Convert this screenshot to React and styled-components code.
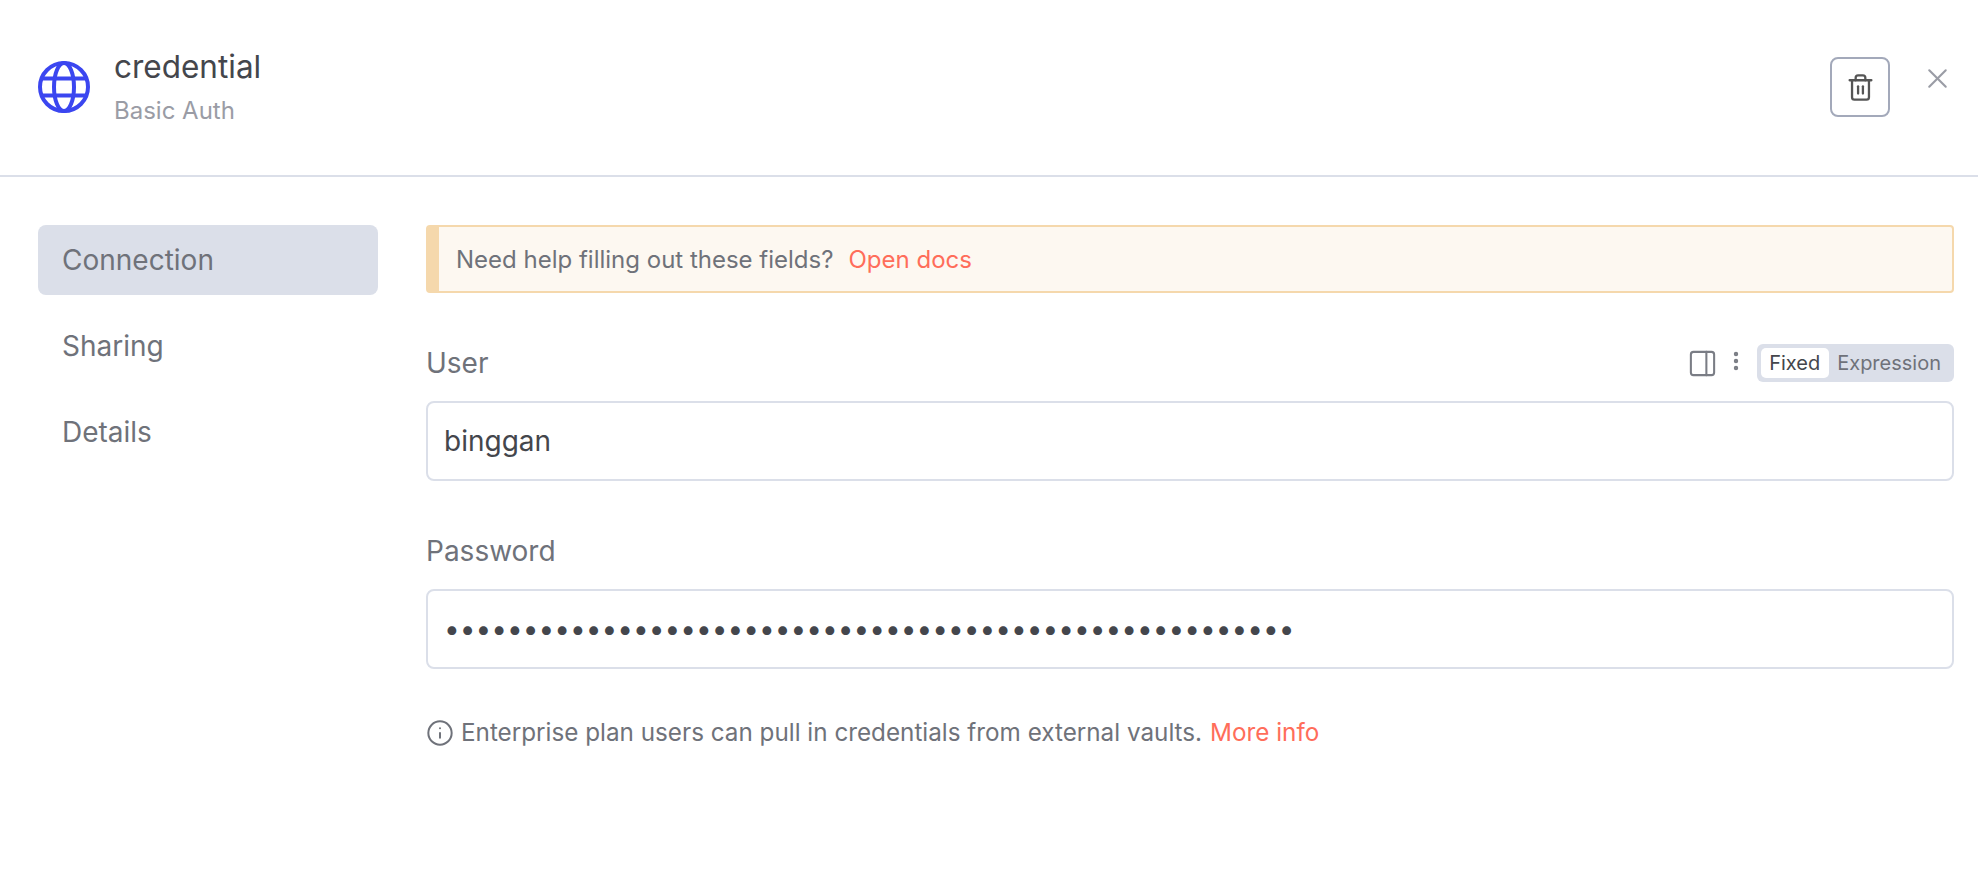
import styled, {createGlobalStyle} from "styled-components";
import {Trash2, X, PanelRight, EllipsisVertical, Info} from "lucide-react";

const GlobalStyle = createGlobalStyle`
  html, body {
    margin: 0;
    padding: 0;
    background: #fff;
    font-family: Inter, "Liberation Sans", sans-serif;
  }
`;

const Page = styled.div`
  width: 1978px;
  height: 870px;
  overflow: hidden;
  background: #fff;
`;

const Header = styled.header`
  height: 177px;
  box-sizing: border-box;
  border-bottom: 2px solid #dbdfe9;
  padding: 57px 24px 0 38px;
  display: flex;
  align-items: flex-start;
`;

const CredentialIcon = styled.svg`
  width: 52px;
  height: 52px;
  margin-top: 4px;
  flex-shrink: 0;
  color: #3b46f0;
`;

const TitleBlock = styled.div`
  margin-left: 24px;
  flex: 1;
  margin-top: -10px;
`;

const Title = styled.div`
  font-size: 31.5px;
  line-height: 40px;
  color: #44464c;
`;

const Subtitle = styled.div`
  font-size: 24px;
  line-height: 30px;
  margin-top: 9px;
  color: #9a9ca5;
`;

const IconButton = styled.button`
  width: 60px;
  height: 60px;
  box-sizing: border-box;
  border: 2px solid #a3a9ba;
  border-radius: 8px;
  background: #fff;
  color: #555;
  padding: 0;
  display: flex;
  align-items: center;
  justify-content: center;
`;

const CloseButton = styled.button`
  margin: 5px 0 0 31px;
  width: 33px;
  height: 33px;
  padding: 0;
  border: 0;
  background: none;
  color: #9a9ca5;
  display: flex;
  align-items: center;
  justify-content: center;
`;

const Body = styled.div`
  display: flex;
  padding: 48px 24px 0 38px;
`;

const Sidebar = styled.nav`
  width: 340px;
  flex-shrink: 0;
  display: flex;
  flex-direction: column;
  gap: 16px;
`;

const NavItem = styled.div`
  height: 70px;
  line-height: 70px;
  padding-left: 24px;
  border-radius: 8px;
  font-size: 28px;
  color: #6f727a;
  background: ${p => (p.$active ? "#dbdfe9" : "transparent")};
`;

const Content = styled.main`
  flex: 1;
  margin-left: 48px;
  min-width: 0;
`;

const Banner = styled.div`
  height: 68px;
  box-sizing: border-box;
  border: 2px solid #f5d8ac;
  border-left-width: 13px;
  border-radius: 4px;
  background: #fdf8f1;
  padding-left: 17px;
  display: flex;
  align-items: center;
  font-size: 24px;
  color: #6f727a;
`;

const Link = styled.a`
  color: #ff6d5a;
  margin-left: ${p => (p.$gap ? "15px" : "8px")};
`;

const Field = styled.div`
  margin-top: 51px;
`;

const FieldHead = styled.div`
  height: 38px;
  display: flex;
  align-items: center;
`;

const Label = styled.label`
  flex: 1;
  font-size: 28px;
  color: #6f727a;
`;

const FieldIcons = styled.div`
  display: flex;
  align-items: center;
  color: #7a7d85;
  gap: 6px;
  margin-right: 9px;
`;

const MoreIcon = styled(EllipsisVertical)`
  margin-bottom: 4px;
`;

const Toggle = styled.div`
  height: 38px;
  box-sizing: border-box;
  padding: 4px;
  border-radius: 6px;
  background: #dbdfe9;
  display: flex;
  font-size: 20px;
  color: #6f727a;
`;

const ToggleOption = styled.span`
  line-height: 30px;
  padding: 0 9px 0 8px;
  border-radius: 5px;
  ${p => p.$active && "background: #fff; color: #44464c;"}
`;

const Input = styled.input`
  display: block;
  width: 100%;
  height: 80px;
  margin-top: 19px;
  box-sizing: border-box;
  border: 2px solid #dbdfe9;
  border-radius: 8px;
  padding: 0 16px;
  outline: none;
  background: #fff;
  font-family: Inter, "Liberation Sans", sans-serif;
  font-size: 28px;
  color: #44464c;
`;

const Hint = styled.div`
  margin-top: 49px;
  display: flex;
  align-items: center;
  font-size: 24.25px;
  color: #6f727a;
  svg {
    margin-right: 7px;
  }
`;

const App = () => (
    <Page>
        <GlobalStyle/>
        <Header>
            <CredentialIcon viewBox="0 0 52 52" fill="none" stroke="currentColor" strokeWidth="4">
                <circle cx="26" cy="26" r="24"/>
                <ellipse cx="26" cy="26" rx="10" ry="24"/>
                <path d="M4 17.5h44M4 34.5h44"/>
            </CredentialIcon>
            <TitleBlock>
                <Title>credential</Title>
                <Subtitle>Basic Auth</Subtitle>
            </TitleBlock>
            <IconButton><Trash2 size={29} strokeWidth={1.9}/></IconButton>
            <CloseButton><X size={33} strokeWidth={1.5}/></CloseButton>
        </Header>
        <Body>
            <Sidebar>
                <NavItem $active>Connection</NavItem>
                <NavItem>Sharing</NavItem>
                <NavItem>Details</NavItem>
            </Sidebar>
            <Content>
                <Banner>
                    Need help filling out these fields?
                    <Link $gap>Open docs</Link>
                </Banner>
                <Field>
                    <FieldHead>
                        <Label>User</Label>
                        <FieldIcons>
                            <PanelRight size={31} strokeWidth={1.6}/>
                            <MoreIcon size={24} strokeWidth={2.4}/>
                        </FieldIcons>
                        <Toggle>
                            <ToggleOption $active>Fixed</ToggleOption>
                            <ToggleOption>Expression</ToggleOption>
                        </Toggle>
                    </FieldHead>
                    <Input type="text" defaultValue="binggan" readOnly/>
                </Field>
                <Field>
                    <FieldHead>
                        <Label>Password</Label>
                    </FieldHead>
                    <Input type="password" defaultValue={"x".repeat(54)} readOnly/>
                </Field>
                <Hint>
                    <Info size={28} strokeWidth={1.7}/>
                    Enterprise plan users can pull in credentials from external vaults.
                    <Link>More info</Link>
                </Hint>
            </Content>
        </Body>
    </Page>
);

export default App;
